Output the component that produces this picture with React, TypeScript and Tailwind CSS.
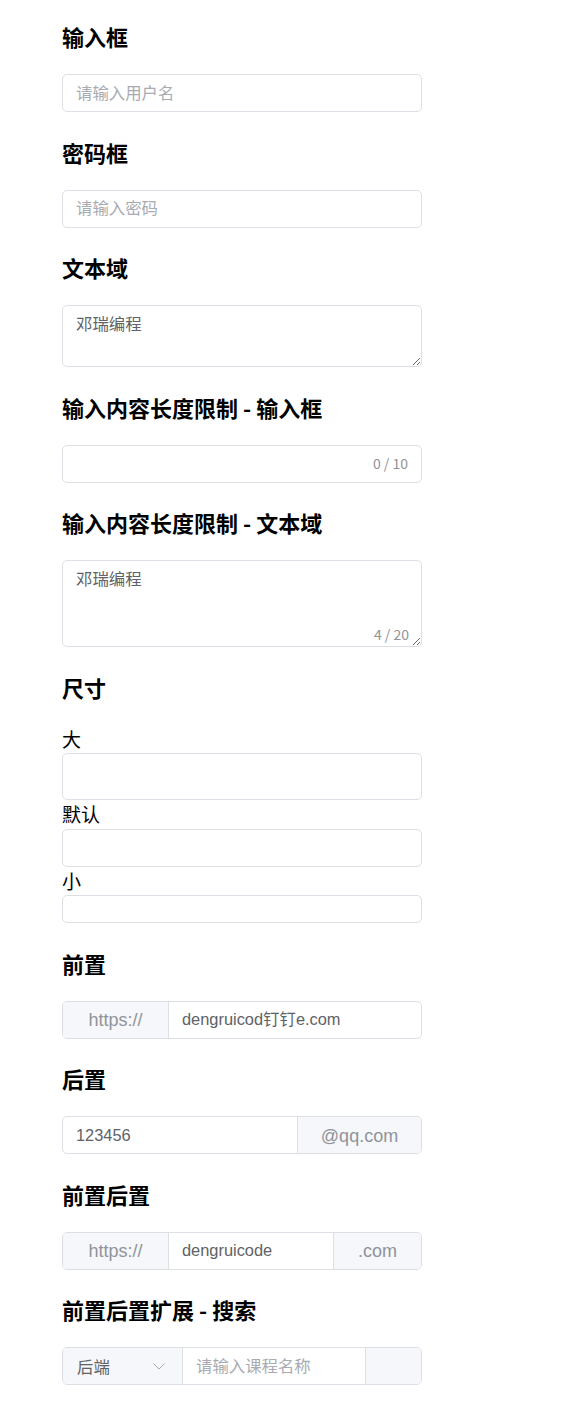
const cjk = '[font-family:"Noto_Sans_CJK_SC",sans-serif]';
const ui = '[font-family:"Liberation_Sans","Noto_Sans_CJK_SC",sans-serif]';

function Title({ children, first }: { children: React.ReactNode; first?: boolean }) {
  return (
    <h3
      className={`${cjk} ${first ? 'mt-[20px]' : 'mt-[23.5px]'} mb-[22px] text-[22px] leading-[32px] font-bold text-black`}
    >
      {children}
    </h3>
  );
}

const box =
  'block w-full rounded-[5px] border border-[#dcdfe6] bg-white px-[13px] text-[16.4px] text-[#606266] outline-none placeholder:text-[#a8abb2]';

const field = 'block min-w-0 flex-1 px-[13px] text-[16.4px] text-[#606266] outline-none placeholder:text-[#a8abb2]';

const addon =
  'flex shrink-0 items-center justify-center bg-[#f5f7fa] pt-[2px] text-[18px] text-[#909399] border-[#dcdfe6]';

function Label({ children }: { children: React.ReactNode }) {
  return <div className={`${cjk} text-[19px] leading-[28.5px] text-black`}>{children}</div>;
}

export default function App() {
  return (
    <div className={`min-h-screen bg-white pl-[62px] pb-[35px] ${ui}`}>
      <div className="w-[360px]">
        {/* 输入框 */}
        <Title first>输入框</Title>
        <input className={`${box} h-[38px]`} placeholder="请输入用户名" />

        {/* 密码框 */}
        <Title>密码框</Title>
        <input type="password" className={`${box} h-[38px]`} placeholder="请输入密码" />

        {/* 文本域 */}
        <Title>文本域</Title>
        <textarea className={`${box} h-[62px] resize-y py-[6px] leading-[24px]`} defaultValue="邓瑞编程" />

        {/* 长度限制 - 输入框 */}
        <Title>输入内容长度限制 - 输入框</Title>
        <div className="flex h-[38px] items-center rounded-[5px] border border-[#dcdfe6] bg-white pr-[13px]">
          <input className={field} />
          <span className={`${cjk} text-[14px] text-[#909399]`}>0 / 10</span>
        </div>

        {/* 长度限制 - 文本域 */}
        <Title>输入内容长度限制 - 文本域</Title>
        <div className="relative">
          <textarea className={`${box} h-[87px] resize-y py-[6px] leading-[24px]`} defaultValue="邓瑞编程" />
          <span
            className={`${cjk} absolute right-[13px] bottom-[5px] bg-white text-[14px] leading-[16px] text-[#909399]`}
          >
            4 / 20
          </span>
        </div>

        {/* 尺寸 */}
        <Title>尺寸</Title>
        <Label>大</Label>
        <input className={`${box} h-[47px]`} />
        <Label>默认</Label>
        <input className={`${box} h-[38px]`} />
        <Label>小</Label>
        <input className={`${box} h-[28px]`} />

        {/* 前置 */}
        <Title>前置</Title>
        <div className="flex h-[38px] overflow-hidden rounded-[5px] border border-[#dcdfe6]">
          <div className={`${addon} w-[106px] border-r`}>https://</div>
          <input className={field} defaultValue="dengruicod钉钉e.com" />
        </div>

        {/* 后置 */}
        <Title>后置</Title>
        <div className="flex h-[38px] overflow-hidden rounded-[5px] border border-[#dcdfe6]">
          <input className={field} defaultValue="123456" />
          <div className={`${addon} w-[124px] border-l`}>@qq.com</div>
        </div>

        {/* 前置后置 */}
        <Title>前置后置</Title>
        <div className="flex h-[38px] overflow-hidden rounded-[5px] border border-[#dcdfe6]">
          <div className={`${addon} w-[106px] border-r`}>https://</div>
          <input className={field} defaultValue="dengruicode" />
          <div className={`${addon} w-[88px] border-l`}>.com</div>
        </div>

        {/* 前置后置扩展 - 搜索 */}
        <Title>前置后置扩展 - 搜索</Title>
        <div className="flex h-[38px] overflow-hidden rounded-[5px] border border-[#dcdfe6]">
          <div className="flex w-[120px] shrink-0 items-center justify-between border-r border-[#dcdfe6] bg-[#f5f7fa] pr-[17px] pl-[14px]">
            <span className="pt-[2px] text-[16.4px] text-[#606266]">后端</span>
            <svg width="12" height="7" viewBox="0 0 12 7" fill="none">
              <path d="M0.5 0.5 L6 6 L11.5 0.5" stroke="#a8abb2" strokeWidth="1" />
            </svg>
          </div>
          <input className={field} placeholder="请输入课程名称" />
          <div className="w-[56px] shrink-0 border-l border-[#dcdfe6] bg-[#f5f7fa]" />
        </div>
      </div>
    </div>
  );
}
